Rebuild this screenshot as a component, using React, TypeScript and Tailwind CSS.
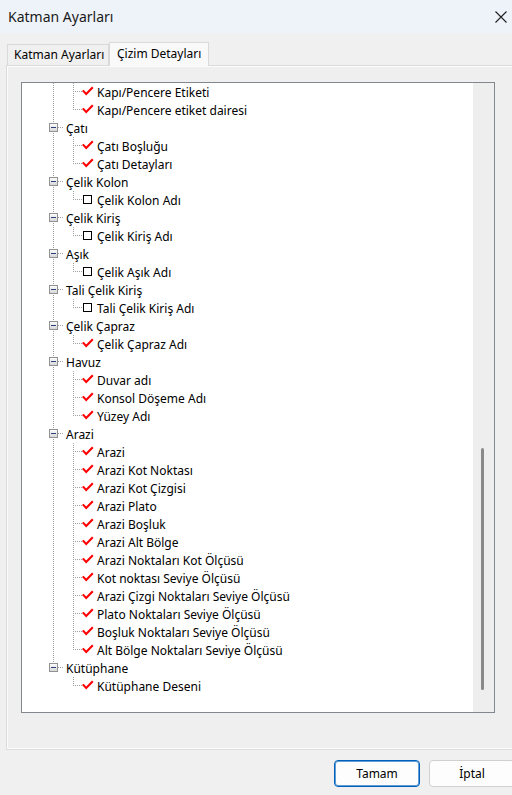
import React from "react";

type Child = { label: string; checked: boolean };
type Group = { title?: string; children: Child[] };

const on = (label: string): Child => ({ label, checked: true });
const off = (label: string): Child => ({ label, checked: false });

// the tree is scrolled down, the first group's header sits above the visible area
const groups: Group[] = [
	{ children: [on("Kapı/Pencere Etiketi"), on("Kapı/Pencere etiket dairesi")] },
	{ title: "Çatı", children: [on("Çatı Boşluğu"), on("Çatı Detayları")] },
	{ title: "Çelik Kolon", children: [off("Çelik Kolon Adı")] },
	{ title: "Çelik Kiriş", children: [off("Çelik Kiriş Adı")] },
	{ title: "Aşık", children: [off("Çelik Aşık Adı")] },
	{ title: "Tali Çelik Kiriş", children: [off("Tali Çelik Kiriş Adı")] },
	{ title: "Çelik Çapraz", children: [on("Çelik Çapraz Adı")] },
	{ title: "Havuz", children: [on("Duvar adı"), on("Konsol Döşeme Adı"), on("Yüzey Adı")] },
	{
		title: "Arazi",
		children: [
			on("Arazi"),
			on("Arazi Kot Noktası"),
			on("Arazi Kot Çizgisi"),
			on("Arazi Plato"),
			on("Arazi Boşluk"),
			on("Arazi Alt Bölge"),
			on("Arazi Noktaları Kot Ölçüsü"),
			on("Kot noktası Seviye Ölçüsü"),
			on("Arazi Çizgi Noktaları Seviye Ölçüsü"),
			on("Plato Noktaları Seviye Ölçüsü"),
			on("Boşluk Noktaları Seviye Ölçüsü"),
			on("Alt Bölge Noktaları Seviye Ölçüsü"),
		],
	},
	{ title: "Kütüphane", children: [on("Kütüphane Deseni")] },
];

const LINE = "#a0a0a0";

const Dots = (props: { x1: number; y1: number; x2: number; y2: number }) => (
	<line {...props} stroke={LINE} strokeWidth={1} strokeDasharray="1 1" />
);

const GroupGuide = ({ last }: { last: boolean }) => (
	<svg width="20" height="18" className="shrink-0">
		<defs>
			<linearGradient id="boxFill" x1="0" y1="0" x2="0" y2="1">
				<stop offset="0" stopColor="#ffffff" />
				<stop offset="1" stopColor="#d4d4d4" />
			</linearGradient>
		</defs>
		<Dots x1={9.5} y1={0} x2={9.5} y2={4} />
		{!last && <Dots x1={9.5} y1={14} x2={9.5} y2={18} />}
		<rect x={5.5} y={4.5} width={8} height={8} fill="url(#boxFill)" stroke="#919191" />
		<line x1={7} y1={8.5} x2={12} y2={8.5} stroke="#2d3f78" strokeWidth={1} />
		<Dots x1={14} y1={8.5} x2={20} y2={8.5} />
	</svg>
);

const ChildGuide = ({ groupLast, last }: { groupLast: boolean; last: boolean }) => (
	<svg width="38" height="18" className="shrink-0">
		{!groupLast && <Dots x1={9.5} y1={0} x2={9.5} y2={18} />}
		<Dots x1={29.5} y1={0} x2={29.5} y2={last ? 9 : 18} />
		<Dots x1={29} y1={8.5} x2={38} y2={8.5} />
	</svg>
);

const Mark = ({ checked }: { checked: boolean }) => (
	<svg width="12" height="18" className="shrink-0">
		{checked ? (
			<path d="M0.8 7.4 L4.2 11 L10.8 4.2" fill="none" stroke="#ff0000" strokeWidth={2.1} />
		) : (
			<rect x={1.5} y={4.5} width={8} height={8} fill="#ffffff" stroke="#000000" />
		)}
	</svg>
);

const Tree = () => (
	<div className="flex flex-col pl-[22px]">
		{groups.map((g, gi) => {
			const groupLast = gi === groups.length - 1;
			return (
				<React.Fragment key={gi}>
					{g.title && (
						<div className="flex h-[18px] items-center">
							<GroupGuide last={groupLast} />
							<span className="ml-[2px] pt-[2px] leading-[16px] whitespace-nowrap">{g.title}</span>
						</div>
					)}
					{g.children.map((c, ci) => (
						<div key={ci} className="flex h-[18px] items-center">
							<ChildGuide groupLast={groupLast} last={ci === g.children.length - 1} />
							<Mark checked={c.checked} />
							<span className="ml-[3px] pt-[2px] leading-[16px] whitespace-nowrap">{c.label}</span>
						</div>
					))}
				</React.Fragment>
			);
		})}
	</div>
);

export default function App() {
	return (
		<div
			className="w-[512px] h-[795px] overflow-hidden bg-[#f0f0f0] text-[12px] text-black flex flex-col"
			style={{ fontFamily: '"Segoe UI", "Noto Sans", sans-serif' }}
		>
			{/* title bar */}
			<div className="h-[33px] shrink-0 bg-[#eef3f9] flex items-center justify-between pl-[8px] pr-[5px]">
				<span className="text-[14px] text-[#1a1a1a]">Katman Ayarları</span>
				<svg width="12" height="12" viewBox="0 0 12 12">
					<path d="M0.5 0.5 L11.5 11.5 M11.5 0.5 L0.5 11.5" stroke="#1f1f1f" strokeWidth={1.1} />
				</svg>
			</div>

			{/* tabs */}
			<div className="mt-[9px] ml-[6px] h-[23px] flex items-end shrink-0">
				<div className="ml-[1px] w-[102px] h-[21px] border border-b-0 border-[#d9d9d9] bg-[#f0f0f0] flex items-center pl-[6px]">
					Katman Ayarları
				</div>
				<div className="relative z-10 -mb-px w-[100px] h-[24px] border border-b-0 border-[#d9d9d9] bg-[#f9f9f9] flex items-center pl-[7px] pb-[2px]">
					Çizim Detayları
				</div>
			</div>

			{/* tab page */}
			<div className="ml-[6px] w-[508px] h-[685px] shrink-0 border border-[#dcdcdc] bg-[#efefef] shadow-[inset_1px_1px_0_#fbfbfb,inset_-1px_-1px_0_#fbfbfb] pt-[16px] pl-[14px]">
				<div className="w-[474px] h-[631px] border border-[#828790] bg-white flex">
					<div className="flex-1 overflow-hidden">
						<Tree />
					</div>
					<div className="w-[21px] bg-[#eeeeee] flex flex-col justify-end pb-[22px] pl-[8px]">
						<div className="w-[3px] h-[242px] rounded-full bg-[#8a8a8a]" />
					</div>
				</div>
			</div>

			{/* dialog buttons */}
			<div className="mt-[10px] pl-[334px] flex gap-[9px] shrink-0">
				<button className="w-[86px] h-[27px] shrink-0 rounded-[4px] border border-[#005fb8] shadow-[inset_0_0_0_1px_#5f9fd6] bg-[#fdfdfd] text-[12px]">
					Tamam
				</button>
				<button className="w-[86px] h-[27px] shrink-0 rounded-[4px] border border-[#d0d0d0] bg-[#fdfdfd] text-[12px]">
					İptal
				</button>
			</div>
		</div>
	);
}
